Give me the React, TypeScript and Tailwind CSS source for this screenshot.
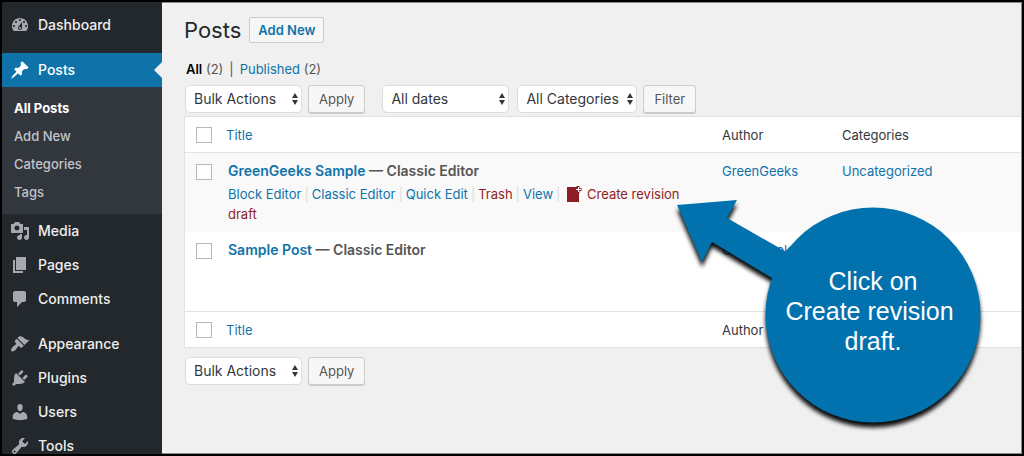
import type { ReactNode } from "react";

const icons = {
  dashboard:
    "M3.76 16h12.48c1.1-1.37 1.76-3.11 1.76-5 0-4.42-3.58-8-8-8s-8 3.58-8 8c0 1.89.66 3.63 1.76 5zM10 4c.55 0 1 .45 1 1s-.45 1-1 1-1-.45-1-1 .45-1 1-1zM6 6c.55 0 1 .45 1 1s-.45 1-1 1-1-.45-1-1 .45-1 1-1zm8 0c.55 0 1 .45 1 1s-.45 1-1 1-1-.45-1-1 .45-1 1-1zm-5.37 5.55L12 7v6c0 1.1-.9 2-2 2s-2-.9-2-2c0-.57.24-1.08.63-1.45zM4 10c.55 0 1 .45 1 1s-.45 1-1 1-1-.45-1-1 .45-1 1-1zm12 0c.55 0 1 .45 1 1s-.45 1-1 1-1-.45-1-1 .45-1 1-1zm-5 3c0-.55-.45-1-1-1s-1 .45-1 1 .45 1 1 1 1-.45 1-1z",
  posts:
    "M10.44 3.02l1.82-1.82 6.36 6.35-1.83 1.82c-1.05-.68-2.48-.57-3.41.36l-.75.75c-.92.93-1.04 2.35-.35 3.41l-1.83 1.82-2.41-2.41-2.8 2.79c-.42.42-3.38 2.71-3.8 2.29s1.86-3.39 2.28-3.81l2.79-2.79L4.1 9.36l1.83-1.82c1.05.69 2.48.57 3.4-.36l.75-.75c.93-.92 1.05-2.35.36-3.41z",
  media:
    "M13 11V4c0-.55-.45-1-1-1h-1.67L9 1H5L3.67 3H2c-.55 0-1 .45-1 1v7c0 .55.45 1 1 1h10c.55 0 1-.45 1-1zM7 4.5c1.38 0 2.5 1.12 2.5 2.5S8.38 9.5 7 9.5 4.5 8.38 4.5 7 5.62 4.5 7 4.5zM14 6h5v10.5c0 1.38-1.12 2.5-2.5 2.5S14 17.88 14 16.5s1.12-2.5 2.5-2.5c.17 0 .34.02.5.05V9h-3V6zm-4 8.05V13h2v3.5c0 1.38-1.12 2.5-2.5 2.5S7 17.88 7 16.5 8.12 14 9.5 14c.17 0 .34.02.5.05z",
  pages: "M6 15V2h10v13H6zm-1 1h8v2H3V5h2v11z",
  comments:
    "M5 2h9c1.1 0 2 .9 2 2v7c0 1.1-.9 2-2 2h-2l-5 5v-5H5c-1.1 0-2-.9-2-2V4c0-1.1.9-2 2-2z",
  appearance:
    "M14.48 11.06L7.41 3.99l1.5-1.5c.5-.56 2.3-.47 3.51.32 1.21.8 1.43 1.28 2.91 2.1 1.18.64 2.45 1.26 4.45.85zm-.71.71L6.7 4.7 4.93 6.47c-.39.39-.39 1.02 0 1.41l1.06 1.06c.39.39.39 1.03 0 1.42-.6.6-1.43 1.11-2.21 1.69-.35.26-.7.53-1.01.84C1.43 14.23.4 16.08 1.4 17.07c.99 1 2.84-.03 4.18-1.36.31-.31.58-.66.85-1.02.57-.78 1.08-1.61 1.69-2.21.39-.39 1.02-.39 1.41 0l1.06 1.06c.39.39 1.02.39 1.41 0z",
  plugins:
    "M13.11 4.36L9.87 7.6 8 5.73l3.24-3.24c.35-.34 1.05-.2 1.56.32.52.51.66 1.21.31 1.55zm-8 1.77l.91-1.12 9.01 9.01-1.19.84c-.71.71-2.63 1.16-3.82 1.16H6.14L4.9 17.26c-.59.59-1.54.59-2.12 0-.59-.58-.59-1.53 0-2.12l1.24-1.24v-3.88c0-1.13.4-3.19 1.09-3.89zm7.26 3.97l3.24-3.24c.34-.35 1.04-.21 1.55.31.52.51.66 1.21.31 1.55l-3.24 3.25z",
  users:
    "M10 9.25c-2.27 0-2.73-3.44-2.73-3.44C7 4.02 7.82 2 9.97 2c2.16 0 2.98 2.02 2.71 3.81 0 0-.41 3.44-2.68 3.44zm0 2.57L12.72 10c2.39 0 4.52 2.33 4.52 4.53v2.49s-3.65 1.13-7.24 1.13c-3.65 0-7.24-1.13-7.24-1.13v-2.49c0-2.25 1.94-4.48 4.47-4.48z",
  tools:
    "M16.68 9.77c-1.34 1.34-3.3 1.67-4.95.99l-5.41 6.52c-.99.99-2.59.99-3.58 0s-.99-2.59 0-3.57l6.52-5.42c-.68-1.65-.35-3.61.99-4.95 1.28-1.28 3.12-1.62 4.72-1.06l-2.89 2.89 2.82 2.82 2.86-2.87c.53 1.58.18 3.39-1.08 4.65zM3.81 16.21c.4.39 1.04.39 1.43 0 .4-.4.4-1.04 0-1.43-.39-.4-1.03-.4-1.43 0-.39.39-.39 1.03 0 1.43z",
};

type IconName = keyof typeof icons;

function MenuItem({ icon, label, current = false }: { icon: IconName; label: string; current?: boolean }) {
  return (
    <a
      href="#"
      className={
        current
          ? "relative flex h-[34px] items-center gap-2 bg-[#0f73aa] pl-2 text-sm font-medium text-white"
          : "relative flex h-[34px] items-center gap-2 pl-2 text-sm font-medium text-[#eeeeee]"
      }
    >
      <svg
        viewBox="0 0 20 20"
        aria-hidden="true"
        className={current ? "size-5 fill-white" : "size-5 fill-[#a6a9ae]"}
      >
        <path d={icons[icon]} fillRule="evenodd" />
      </svg>
      {label}
      {current && (
        <svg viewBox="0 0 8 16" aria-hidden="true" className="absolute top-[9px] right-0 h-4 w-2 fill-[#f0f0f0]">
          <path d="M8 0v16L0 8z" />
        </svg>
      )}
    </a>
  );
}

function Sidebar() {
  const sub = ["Add New", "Categories", "Tags"];
  return (
    <nav aria-label="Main menu" className="w-40 shrink-0 bg-[#23282d] pt-1.5">
      <MenuItem icon="dashboard" label="Dashboard" />
      <div className="mt-[11px]">
        <MenuItem icon="posts" label="Posts" current />
        <ul className="bg-[#32363d] pt-[7px] pb-2 pl-3 text-[13px] leading-7 font-medium text-[#c2c5c9]">
          <li>
            <a href="#" className="font-bold text-white">
              All Posts
            </a>
          </li>
          {sub.map((s) => (
            <li key={s}>
              <a href="#">{s}</a>
            </li>
          ))}
        </ul>
      </div>
      <MenuItem icon="media" label="Media" />
      <MenuItem icon="pages" label="Pages" />
      <MenuItem icon="comments" label="Comments" />
      <div className="mt-[11px]">
        <MenuItem icon="appearance" label="Appearance" />
        <MenuItem icon="plugins" label="Plugins" />
        <MenuItem icon="users" label="Users" />
        <MenuItem icon="tools" label="Tools" />
      </div>
    </nav>
  );
}

function Select({ label, value, width }: { label: string; value: string; width: string }) {
  return (
    <div className={`relative ${width}`}>
      <select
        aria-label={label}
        className="block h-7 w-full appearance-none rounded-[5px] border border-[#dddddd] bg-white pl-2 text-sm text-[#32373c]"
      >
        <option>{value}</option>
      </select>
      <svg
        viewBox="0 0 6 12"
        aria-hidden="true"
        className="pointer-events-none absolute top-2 right-1 h-3 w-1.5 fill-[#32373c]"
      >
        <path d="M3 0l3 5H0zM3 12l3-5H0z" />
      </svg>
    </div>
  );
}

function Button({ children }: { children: ReactNode }) {
  return (
    <button
      type="button"
      className="h-7 rounded-[3px] border border-[#cccccc] bg-[#f7f7f7] px-2.5 text-[13px] text-[#555555] shadow-[0_1px_0_#cccccc]"
    >
      {children}
    </button>
  );
}

function BulkActions() {
  return (
    <div className="flex gap-1.5">
      <Select label="Select bulk action" value="Bulk Actions" width="w-[117px]" />
      <Button>Apply</Button>
    </div>
  );
}

function Check({ label }: { label: string }) {
  return (
    <input
      type="checkbox"
      aria-label={label}
      className="block size-4 appearance-none border border-[#b4b9be] bg-white"
    />
  );
}

function HeadCells() {
  return (
    <>
      <th className="py-2 pl-[11px]">
        <Check label="Select all" />
      </th>
      <th className="px-2">
        <a href="#" className="text-[#0f73aa]">
          Title
        </a>
      </th>
      <th className="px-2.5">Author</th>
      <th className="px-2.5">Categories</th>
    </>
  );
}

function RevisionIcon() {
  return (
    <svg viewBox="0 0 15 16" aria-hidden="true" className="mr-[5px] inline-block h-4 w-[15px] align-text-bottom">
      <path d="M0 1h8v5h4v10H0z" fill="#8f1d24" />
      <path d="M8 1h3v7H8z" fill="#8f1d24" />
      <path d="M11 0v7M7.500 3.500h7" stroke="#8f1d24" strokeWidth="3" fill="none" />
      <path d="M11.500 1v5M9 3.500h5" stroke="#ffffff" strokeWidth="1" fill="none" />
    </svg>
  );
}

const Bar = () => <span className="px-[3px] text-[#dddddd]">|</span>;

function Row({ title, shaded = false, children }: { title: string; shaded?: boolean; children?: ReactNode }) {
  return (
    <tr className={shaded ? "h-[79px] bg-[#f9f9f9] align-top" : "h-[79px] align-top"}>
      <td className="pt-[11px] pl-[11px]">
        <Check label={`Select ${title}`} />
      </td>
      <td className="px-2.5 py-2">
        <div className="text-sm leading-5 font-semibold text-[#555555]">
          <a href="#" className="text-[#0f73aa]">
            {title}
          </a>{" "}
          — Classic Editor
        </div>
        {children}
      </td>
      <td className="px-2.5 py-2 text-[#0f73aa]">
        <a href="#">GreenGeeks</a>
      </td>
      <td className="px-2.5 py-2 text-[#0f73aa]">
        <a href="#">Uncategorized</a>
      </td>
    </tr>
  );
}

function Callout() {
  return (
    <div className="pointer-events-none absolute top-[190px] left-[508px] h-[246px] w-[320px]">
      <svg viewBox="0 0 320 246" aria-hidden="true" className="size-full overflow-visible fill-[#0272ae]">
        <g className="drop-shadow-[0_5px_2px_rgba(0,0,0,0.95)]">
          <path d="M7 12L67 7L57 25L120 61L107 88L42 49L32 69z" />
          <circle cx="203" cy="122" r="107.500" />
        </g>
      </svg>
      <p className="absolute top-[73px] left-[96px] w-[214px] text-center font-['Liberation_Sans',Arial,sans-serif] text-[25px] leading-[30px] text-white">
        Click on
        <br />
        Create revision&nbsp;
        <br />
        draft.
      </p>
    </div>
  );
}

export default function App() {
  return (
    <div className="flex h-screen overflow-hidden border-2 border-black bg-[#f0f0f0] font-[Inter,'Liberation_Sans',sans-serif] text-[13px] leading-5 text-[#32373c]">
      <Sidebar />
      <main className="relative min-w-0 grow border-y border-r border-[#8a8a8a] pt-3.5 pl-[22px]">
        <div className="flex items-center gap-2">
          <h1 className="text-[22px] leading-[26px] text-[#23282d]">Posts</h1>
          <a
            href="#"
            className="flex h-[26px] items-center rounded-[2px] border border-[#cccccc] bg-[#f7f7f7] px-2 font-semibold text-[#0f73aa]"
          >
            Add New
          </a>
        </div>
        <div className="mt-4 flex gap-1.5 pl-0.5 text-[#555555]">
          <span>
            <a href="#" className="font-semibold text-black">
              All
            </a>{" "}
            (2)
          </span>
          <span>|</span>
          <span>
            <a href="#" className="text-[#0f73aa]">
              Published
            </a>{" "}
            (2)
          </span>
        </div>
        <div className="mt-1.5 flex gap-[17px] pl-px">
          <BulkActions />
          <div className="flex gap-1.5">
            <Select label="Filter by date" value="All dates" width="mr-0.5 w-[127px]" />
            <Select label="Filter by category" value="All Categories" width="w-[120px]" />
            <Button>Filter</Button>
          </div>
        </div>
        <table className="mt-[3px] w-full table-fixed border-separate border-spacing-0 border border-r-0 border-[#e1e1e1] bg-white">
          <colgroup>
            <col className="w-[33px]" />
            <col />
            <col className="w-[120px]" />
            <col className="w-[189px]" />
          </colgroup>
          <thead>
            <tr className="h-9 text-left *:border-b *:border-[#dfe3e6] *:font-normal">
              <HeadCells />
            </tr>
          </thead>
          <tbody>
            <Row title="GreenGeeks Sample" shaded>
              <div className="pt-[3px] text-[#0f73aa]">
                <a href="#">Block Editor</a>
                <Bar />
                <a href="#">Classic Editor</a>
                <Bar />
                <a href="#">Quick Edit</a>
                <Bar />
                <a href="#" className="text-[#8f1d24]">
                  Trash
                </a>
                <Bar />
                <a href="#">View</a>
                <Bar />{" "}
                <a href="#" className="text-[#8f1d24]">
                  <RevisionIcon />
                  <span>Create revision</span> <span>draft</span>
                </a>
              </div>
            </Row>
            <Row title="Sample Post" />
          </tbody>
          <tfoot>
            <tr className="h-9 text-left *:border-t *:border-[#dfe3e6] *:font-normal">
              <HeadCells />
            </tr>
          </tfoot>
        </table>
        <div className="mt-[9px] pl-px">
          <BulkActions />
        </div>
        <Callout />
      </main>
    </div>
  );
}
